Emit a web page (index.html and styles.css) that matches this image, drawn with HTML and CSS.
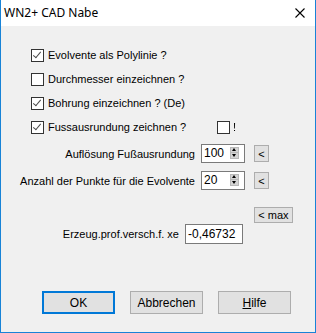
FILE: index.html
```html
<!DOCTYPE html>
<html lang="de">
<head>
    <meta charset="UTF-8">
    <title>WN2+ CAD Nabe</title>
    <link rel="stylesheet" href="styles.css">
</head>
<body>
    <div class="window">
        <div class="titlebar">
            <span class="title">WN2+ CAD Nabe</span>
            <svg class="close" width="10" height="10" viewBox="0 0 10 10">
                <path d="M0.5 0.5 L9.5 9.5 M9.5 0.5 L0.5 9.5" stroke="#000" stroke-width="1.1" fill="none"/>
            </svg>
        </div>

        <div class="dlg">
            <!-- checkboxes -->
            <div class="checks">
                <label class="chk"><span class="box on"></span>Evolvente als Polylinie ?</label>
                <label class="chk"><span class="box"></span>Durchmesser einzeichnen ?</label>
                <label class="chk"><span class="box on"></span>Bohrung einzeichnen ? (De)</label>
                <div class="chk">
                    <span class="box on"></span>Fussausrundung zeichnen ?
                    <span class="box small-box"></span><span class="bang">!</span>
                </div>
            </div>

            <!-- spin fields -->
            <div class="spins">
                <div class="spin-row">
                    <span class="lbl">Auflösung Fußausrundung</span>
                    <div class="edit spin">100<span class="updown"><i class="up"></i><i class="down"></i></span></div>
                    <button class="mini">&lt;</button>
                </div>
                <div class="spin-row">
                    <span class="lbl">Anzahl der Punkte für die Evolvente</span>
                    <div class="edit spin">20<span class="updown"><i class="up"></i><i class="down"></i></span></div>
                    <button class="mini">&lt;</button>
                </div>
            </div>

            <div class="max-row">
                <button class="mini max">&lt; max</button>
            </div>

            <div class="xe-row">
                <span class="lbl">Erzeug.prof.versch.f. xe</span>
                <div class="edit xe">-0,46732</div>
            </div>

            <div class="buttons">
                <button class="btn default">OK</button>
                <button class="btn">Abbrechen</button>
                <button class="btn"><u>H</u>ilfe</button>
            </div>
        </div>
    </div>
</body>
</html>
```

FILE: styles.css
```css
body {
    margin: 0;
    background: #f0f0f0;
}

.window {
    width: 316px;
    height: 333px;
    box-sizing: border-box;
    border: 1px solid #1883d7;
    border-top: none;
    display: flex;
    flex-direction: column;
    font-family: "Liberation Sans", Arial, sans-serif;
    font-size: 11px;
    color: #000;
}

/* title bar */
.titlebar {
    height: 26px;
    background: #fff;
    display: flex;
    align-items: center;
    justify-content: space-between;
    padding: 0 10px 0 3px;
}

.title {
    font-family: "Noto Sans", sans-serif;
    font-size: 12px;
    padding-bottom: 1px;
}

.close {
    margin-top: -1px;
}

/* dialog body */
.dlg {
    flex: 1;
    background: #f0f0f0;
    padding-top: 23px;
    display: flex;
    flex-direction: column;
}

.checks {
    padding-left: 30px;
    display: flex;
    flex-direction: column;
    gap: 11px;
}

.chk {
    display: flex;
    align-items: center;
    height: 13px;
    line-height: 13px;
}

.box {
    width: 11px;
    height: 11px;
    border: 1px solid #333;
    background: #fff;
    margin-right: 4px;
    position: relative;
    flex: none;
}

.box.on::after {
    content: "";
    position: absolute;
    left: 3px;
    top: 0px;
    width: 3px;
    height: 7px;
    border: solid #4a4a4a;
    border-width: 0 1px 1px 0;
    transform: rotate(40deg);
}

.small-box {
    margin-left: 31px;
    margin-right: 3px;
}

.bang {
    color: #000;
    will-change: transform;
}

/* spin fields */
.spins {
    margin-top: 10px;
    display: flex;
    flex-direction: column;
    gap: 8px;
}

.spin-row, .xe-row {
    display: flex;
    align-items: center;
}

.lbl {
    text-align: right;
    white-space: nowrap;
}

.spin-row .lbl {
    width: 194px;
    margin-right: 6px;
}

.edit {
    box-sizing: border-box;
    height: 19px;
    border: 1px solid #7a7a7a;
    background: #fff;
    padding: 0 0 0 2px;
    line-height: 17px;
    font-size: 12px;
}

.spin {
    width: 44px;
    position: relative;
}

.updown {
    position: absolute;
    right: 5px;
    top: 2px;
    display: flex;
    flex-direction: column;
}

.updown i {
    width: 9px;
    height: 6px;
    background: #d4d4d4;
    border: 1px solid #b8b8b8;
    box-sizing: border-box;
    position: relative;
    display: block;
}

.updown i::after {
    content: "";
    position: absolute;
    left: 1px;
    border-left: 2.5px solid transparent;
    border-right: 2.5px solid transparent;
}

.updown .up::after {
    top: 0;
    border-bottom: 3px solid #000;
}

.updown .down {
    border-top: none;
}

.updown .down::after {
    top: 1px;
    border-top: 3px solid #000;
}

.mini {
    margin: 0 0 0 9px;
    height: 17px;
    width: 15px;
    padding: 0;
    background: #e1e1e1;
    border: 1px solid #adadad;
    font-family: "Liberation Sans", Arial, sans-serif;
    font-size: 11px;
    color: #000;
}

.max-row {
    margin-top: 17px;
    padding-left: 253px;
}

.mini.max {
    margin: 0;
    width: 39px;
    height: 16px;
    line-height: 13px;
}

.xe-row {
    margin-top: 1px;
}

.xe-row .lbl {
    width: 178px;
    margin-right: 6px;
}

.edit.xe {
    width: 58px;
    height: 20px;
    line-height: 18px;
}

/* bottom buttons */
.buttons {
    margin-top: 47px;
    padding-left: 41px;
    display: flex;
    gap: 15px;
}

.btn {
    width: 73px;
    height: 23px;
    background: #e1e1e1;
    border: 1px solid #adadad;
    font-family: "Liberation Sans", Arial, sans-serif;
    font-size: 12px;
    color: #000;
    padding: 0;
}

.btn.default {
    border: 2px solid #0078d7;
}
```
